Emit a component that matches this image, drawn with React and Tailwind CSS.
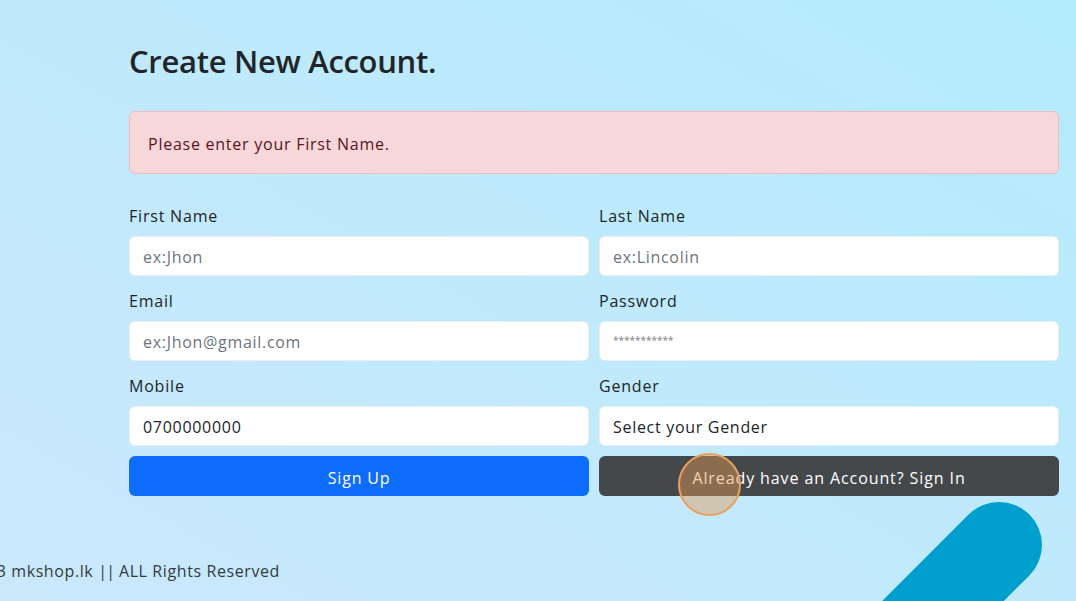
import React from "react";

const font = { fontFamily: '"Open Sans", "Noto Sans", sans-serif' };

function Field({ label, value, placeholder, small }) {
  return (
    <div className="flex flex-col">
      <label className="h-[24px] leading-[24px] text-[16px] text-[#212529] mb-[8px] tracking-[0.8px]">{label}</label>
      <div className="h-[40px] rounded-[6px] bg-white border border-[#e8eef2] flex items-center px-[13px] pt-[2px]">
        {value ? (
          <span className="text-[16px] text-[#212529] tracking-[0.7px]">{value}</span>
        ) : small ? (
          <span className="text-[10px] text-[#7a8188] -mt-[4px]">{placeholder}</span>
        ) : (
          <span className="text-[16px] text-[#6c757d] tracking-[0.7px]">{placeholder}</span>
        )}
      </div>
    </div>
  );
}

export default function App() {
  return (
    <div
      className="relative w-[1076px] h-[601px] overflow-hidden bg-gradient-to-tr from-[#cbe8fb] to-[#b3ebfd]"
      style={font}
    >
      <div className="ml-[129px] w-[930px] pt-[41px]">
        <h2 className="text-[31px] leading-[40px] font-semibold text-[#212529] tracking-[-0.3px]">
          Create New Account.
        </h2>
        <div className="mt-[30px] h-[63px] rounded-[6px] border border-[#f1b9c0] bg-[#f8d7da] flex items-center px-[18px] pt-[2px] text-[16px] tracking-[0.75px] text-[#58151c]">
          Please enter your First Name.
        </div>
        <div className="mt-[30px] grid grid-cols-2 gap-x-[10px] gap-y-[13px]">
          <Field label="First Name" placeholder="ex:Jhon" />
          <Field label="Last Name" placeholder="ex:Lincolin" />
          <Field label="Email" placeholder="ex:Jhon@gmail.com" />
          <Field label="Password" placeholder="***********" small />
          <Field label="Mobile" value="0700000000" />
          <Field label="Gender" value="Select your Gender" />
        </div>
        <div className="mt-[10px] grid grid-cols-2 gap-x-[10px]">
          <button className="h-[40px] rounded-[6px] bg-[#0d6efd] text-white text-[16px] tracking-[0.8px] pt-[3px]" style={font}>
            Sign Up
          </button>
          <button className="relative h-[40px] rounded-[6px] bg-[#45484b] text-white text-[16px] tracking-[0.9px] pt-[3px]" style={font}>
            Already have an Account? Sign In
            <span className="absolute left-[79px] top-[-3px] w-[63px] h-[63px] rounded-full border-[2px] border-[#e8a060] bg-[#e39a55]/45"></span>
          </button>
        </div>
      </div>

      <div className="mt-[60px] w-[280px] h-[30px] flex justify-end items-center overflow-hidden whitespace-nowrap text-[16px] tracking-[0.6px] text-[#343a40]">
        © 2023 mkshop.lk <span className="tracking-[-1px] mx-[5px]">||</span> ALL Rights Reserved
      </div>

      <svg className="absolute left-0 top-0 pointer-events-none" width="1076" height="601">
        <line x1="999" y1="545" x2="880" y2="664" stroke="#009fcd" strokeWidth="86" strokeLinecap="round" />
      </svg>
    </div>
  );
}
